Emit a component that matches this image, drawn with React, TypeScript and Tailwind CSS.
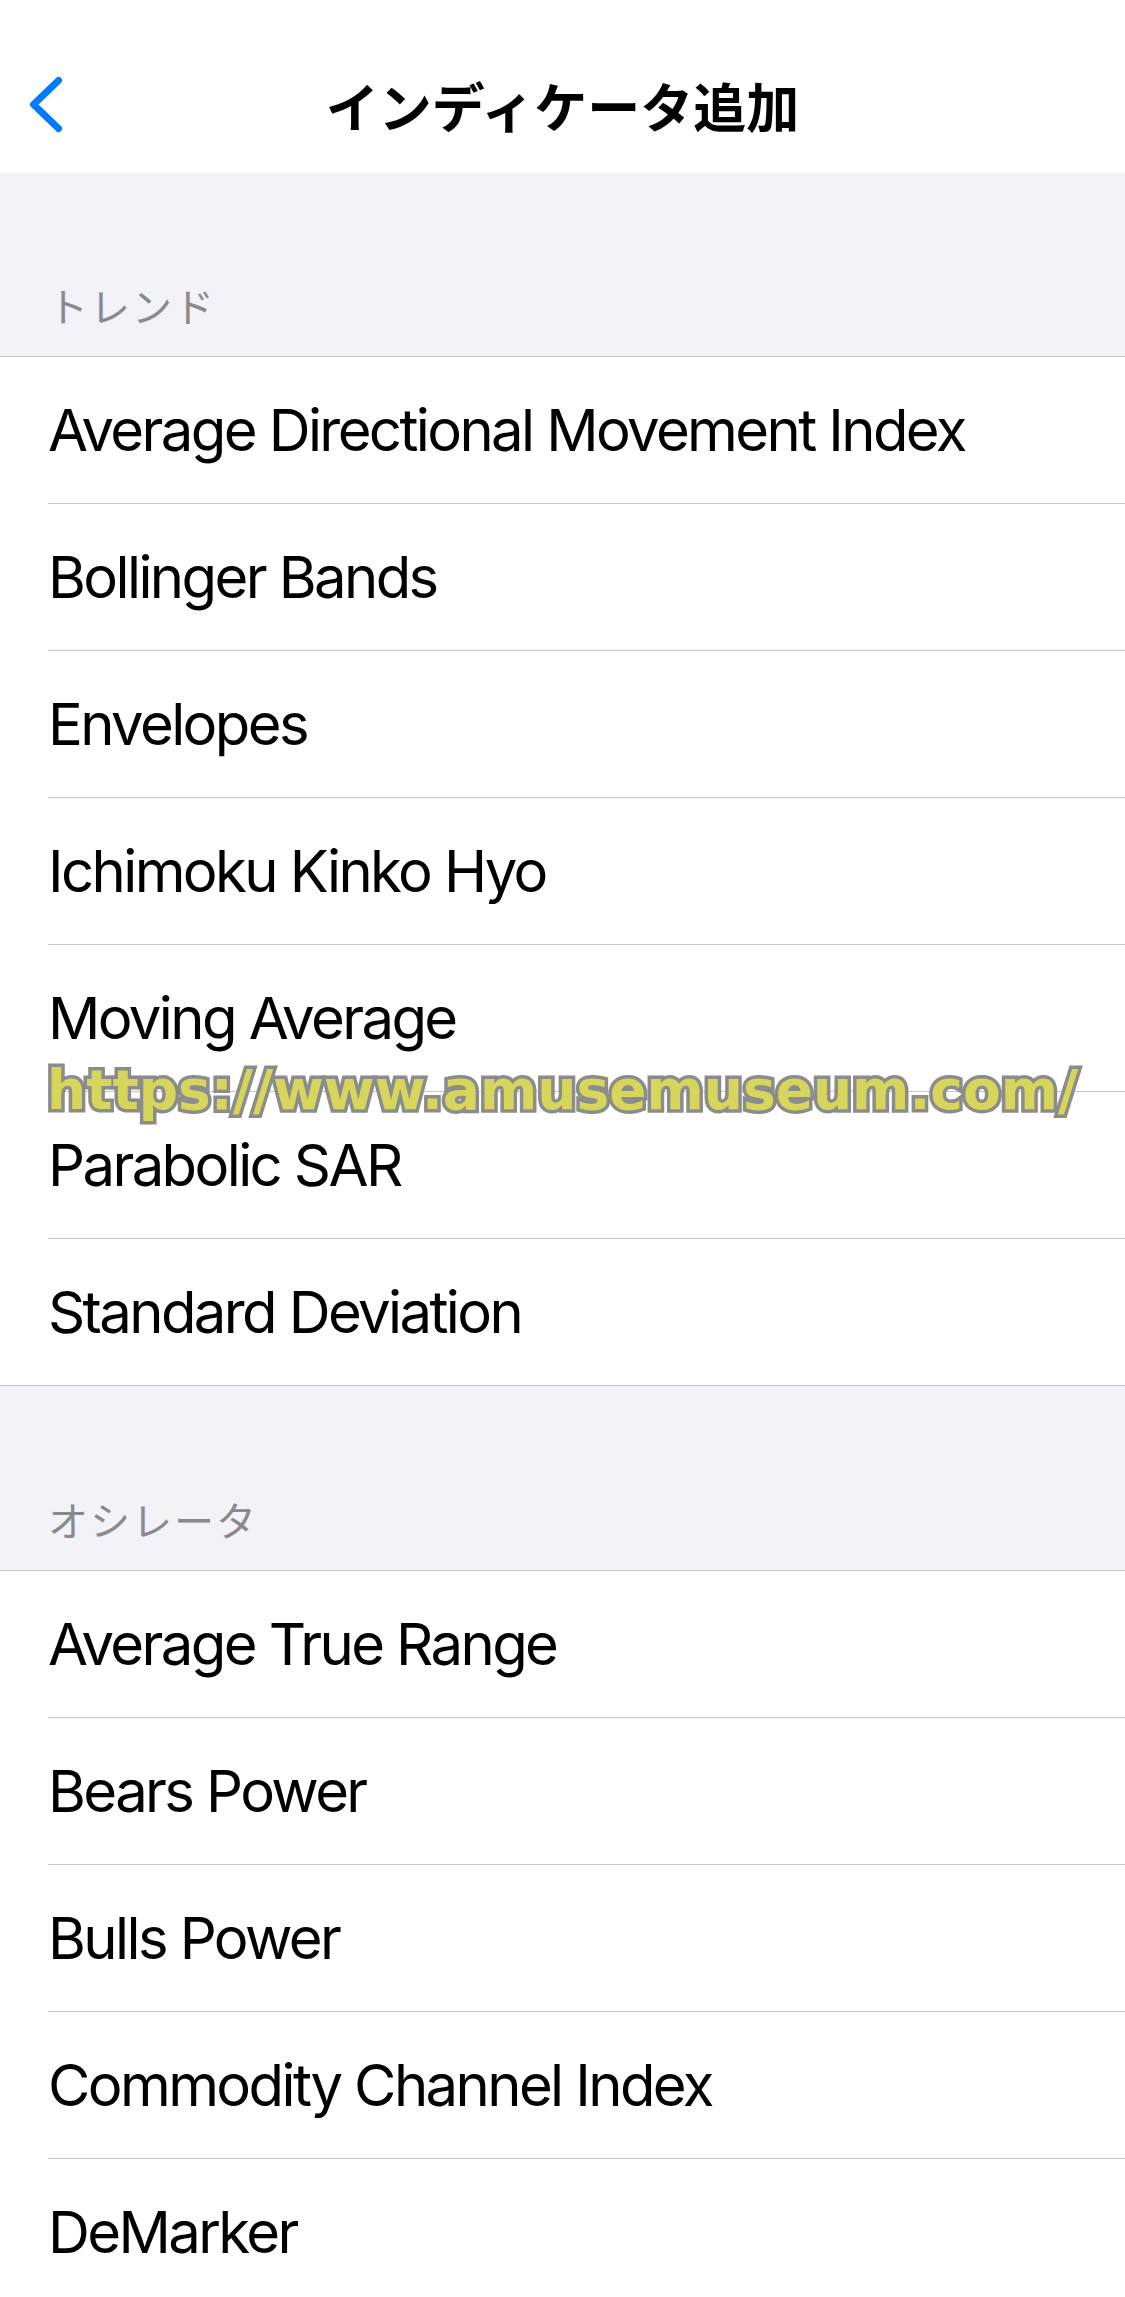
import React from 'react'

const trend = [
  'Average Directional Movement Index',
  'Bollinger Bands',
  'Envelopes',
  'Ichimoku Kinko Hyo',
  'Moving Average',
  'Parabolic SAR',
  'Standard Deviation',
]

const oscillators = [
  'Average True Range',
  'Bears Power',
  'Bulls Power',
  'Commodity Channel Index',
  'DeMarker',
]

function Row({ label, last }: { label: string; last?: boolean }) {
  return (
    <div className={last ? 'bg-white pl-[48px] border-b border-[#c6c6c8]' : 'bg-white pl-[48px]'}>
      <div
        className={
          last
            ? 'h-[146px] flex items-center text-[58px] tracking-[-2.6px] text-black'
            : 'h-[147px] flex items-center border-b border-[#c6c6c8] text-[58px] tracking-[-2.6px] text-black'
        }
      >
        {label}
      </div>
    </div>
  )
}

function SectionHeader({ title, tall }: { title: string; tall?: boolean }) {
  return (
    <div
      className={
        tall
          ? 'h-[185px] bg-[#f2f2f7] border-b border-[#c6c6c8] flex items-end pl-[48px] pb-[31px]'
          : 'h-[184px] bg-[#f2f2f7] border-b border-[#c6c6c8] flex items-end pl-[48px] pb-[31px]'
      }
    >
      <span className="text-[40px] tracking-[2px] leading-none text-[#8a8a8e] font-['Noto_Sans_CJK_JP',sans-serif]">
        {title}
      </span>
    </div>
  )
}

export default function App() {
  return (
    <div className="relative w-[1125px] h-[2297px] overflow-hidden bg-white font-['Inter','Noto_Sans_CJK_JP',sans-serif]">
      {/* ナビバー */}
      <div className="relative h-[173px] bg-white pt-[37px] flex items-center justify-center">
        <svg
          className="absolute left-[26px] top-[73px]"
          width="40"
          height="64"
          viewBox="0 0 40 64"
          fill="none"
        >
          <polyline
            points="32.5,7.5 7.5,31.5 32.5,55.5"
            stroke="#007aff"
            strokeWidth="7"
            strokeLinecap="round"
            strokeLinejoin="round"
          />
        </svg>
        <h1 className="text-[53px] font-bold leading-none text-black font-['Noto_Sans_CJK_JP',sans-serif]">
          インディケータ追加
        </h1>
      </div>

      <SectionHeader title="トレンド" />
      {trend.map((t, i) => (
        <Row key={t} label={t} last={i === trend.length - 1} />
      ))}

      <SectionHeader title="オシレータ" tall />
      {oscillators.map((t) => (
        <Row key={t} label={t} />
      ))}

      {/* watermark */}
      <div className="absolute left-[47px] top-[1063px] text-[55px] leading-none font-bold text-[#d6d65c] font-['DejaVu_Sans',sans-serif] whitespace-nowrap [-webkit-text-stroke:7px_#8c8c8c] [paint-order:stroke_fill] pointer-events-none">
        https://www.amusemuseum.com/
      </div>
    </div>
  )
}
